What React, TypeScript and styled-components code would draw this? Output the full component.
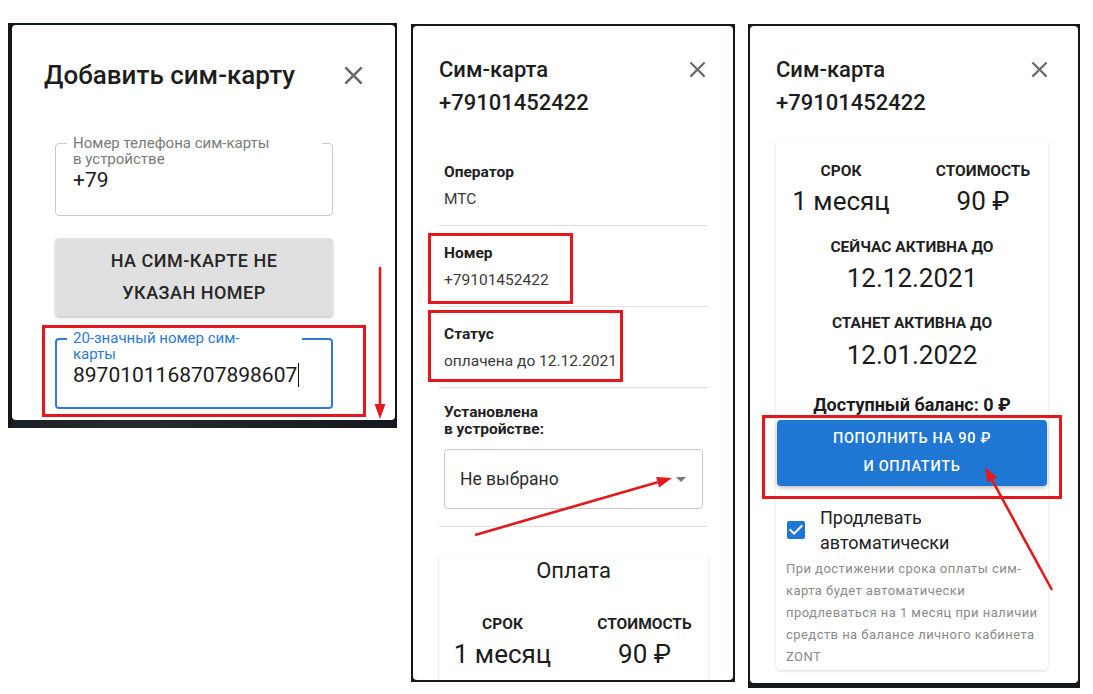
import React from "react"
import styled, { createGlobalStyle } from "styled-components"

const GlobalStyle = createGlobalStyle`
  html, body {
    margin: 0;
    padding: 0;
    background: #fff;
  }
  body {
    font-family: Roboto, "DejaVu Sans", "Liberation Sans", sans-serif;
    color: #1f1f1f;
  }
`

const Page = styled.div`
  display: flex;
  align-items: flex-start;
  padding: 23px 0 0 8px;
  width: 1093px;
  height: 694px;
  box-sizing: border-box;
  overflow: hidden;
`

const Frame = styled.div<{ $w: number; $h: number; $pad: string; $mt?: number; $ml?: number }>`
  position: relative;
  box-sizing: border-box;
  flex: none;
  width: ${p => p.$w}px;
  height: ${p => p.$h}px;
  margin-top: ${p => p.$mt ?? 0}px;
  margin-left: ${p => p.$ml ?? 0}px;
  padding: ${p => p.$pad};
  background: #13181d;
  display: flex;
  flex-direction: column;
`

const Sheet = styled.div`
  flex: 1;
  min-height: 0;
  background: #fff;
  border-radius: 4px;
  overflow: hidden;
  display: flex;
  flex-direction: column;
`

const DarkStrip = styled.div`
  height: 8px;
  background: linear-gradient(90deg, #1b2026 0%, #262b30 30%, #15191d 100%);
`

const DialogHeader = styled.div<{ $pad: string; $align: string }>`
  display: flex;
  justify-content: space-between;
  align-items: ${p => p.$align};
  padding: ${p => p.$pad};
`

const BigTitle = styled.h2`
  margin: 0;
  font-size: 26px;
  line-height: 36px;
  font-weight: 500;
  color: #1d1d1d;
`

const SimTitle = styled.h2`
  margin: 0;
  font-size: 22px;
  line-height: 33px;
  font-weight: 500;
  color: #1d1d1d;
`

const CloseBtn = styled.svg<{ $top?: number }>`
  flex: none;
  margin-top: ${p => p.$top ?? 0}px;
  fill: #6a6a6a;
`

/* ---------- panel 1 ---------- */

const Form = styled.div`
  display: flex;
  flex-direction: column;
  gap: 22px;
  padding: 50px 0 0 43px;
`

const Outlined = styled.div<{ $focused?: boolean; $h: number }>`
  position: relative;
  box-sizing: border-box;
  width: 278px;
  height: ${p => p.$h}px;
  border: ${p => (p.$focused ? "2px solid #2d7bd2" : "1px solid #c8c8c8")};
  border-radius: 4px;
  padding: ${p => (p.$focused ? "23px 16px 0" : "24px 17px 0")};
`

const FloatLabel = styled.label<{ $focused?: boolean; $w: number }>`
  position: absolute;
  top: ${p => (p.$focused ? -10 : -9)}px;
  left: ${p => (p.$focused ? 10 : 11)}px;
  width: ${p => p.$w}px;
  box-sizing: border-box;
  padding: 0 6px;
  background: #fff;
  font-size: 15px;
  line-height: 16px;
  color: ${p => (p.$focused ? "#2d7bd2" : "#7a7a7a")};
`

const FieldValue = styled.div`
  font-size: 21px;
  line-height: 24px;
  color: #1a1a1a;
  display: flex;
  align-items: center;
  white-space: nowrap;
`

const Caret = styled.span`
  display: inline-block;
  width: 0;
  height: 24px;
  border-left: 1.5px solid #111;
  margin-left: 1px;
`

const GreyButton = styled.div`
  box-sizing: border-box;
  width: 278px;
  height: 78px;
  background: #e0e0e0;
  border-radius: 4px;
  box-shadow: 0 2px 3px rgba(0, 0, 0, 0.22);
  display: flex;
  align-items: center;
  justify-content: center;
  text-align: center;
  font-size: 18px;
  line-height: 32px;
  font-weight: 500;
  letter-spacing: 0.5px;
  color: #262626;
`

/* ---------- panels 2, 3 ---------- */

const Body = styled.div<{ $pad: string }>`
  display: flex;
  flex-direction: column;
  padding: ${p => p.$pad};
`

const InfoItem = styled.div`
  padding: 17px 5px 16px;
  border-bottom: 1px solid #e0e0e0;
`

const ItemLabel = styled.div`
  font-size: 15.5px;
  line-height: 20px;
  font-weight: 700;
  color: #212121;
`

const ItemValue = styled.div`
  font-size: 15.5px;
  line-height: 20px;
  margin-top: 7px;
  color: #3a3a3a;
`

const DeviceSection = styled.div`
  padding: 16px 5px 17px;
  border-bottom: 1px solid #e0e0e0;
`

const DeviceLabel = styled.div`
  font-size: 15.5px;
  line-height: 17px;
  font-weight: 700;
  color: #212121;
`

const Select = styled.div`
  box-sizing: border-box;
  height: 60px;
  margin-top: 11px;
  border: 1px solid #c9c9c9;
  border-radius: 4px;
  display: flex;
  align-items: center;
  justify-content: space-between;
  padding: 0 9px 0 15px;
  font-size: 17.5px;
  color: #2b2b2b;
`

const Card = styled.div<{ $mt: number; $pad: string }>`
  margin-top: ${p => p.$mt}px;
  padding: ${p => p.$pad};
  background: #fff;
  border-radius: 4px;
  box-shadow: 0 1px 3px rgba(0, 0, 0, 0.16);
  display: flex;
  flex-direction: column;
  align-items: stretch;
  text-align: center;
`

const CardTitle = styled.div`
  font-size: 22px;
  line-height: 24px;
  color: #1d1d1d;
`

const PriceGrid = styled.div<{ $mt: number }>`
  display: grid;
  grid-template-columns: 120px 120px;
  column-gap: 22px;
  row-gap: 5px;
  justify-content: center;
  margin-top: ${p => p.$mt}px;
`

const SmallCaps = styled.div<{ $mt?: number }>`
  font-size: 15.5px;
  line-height: 20px;
  font-weight: 700;
  color: #1f1f1f;
  margin-top: ${p => p.$mt ?? 0}px;
  white-space: nowrap;
`

const BigValue = styled.div<{ $mt?: number }>`
  font-size: 26px;
  line-height: 30px;
  color: #1b1b1b;
  margin-top: ${p => p.$mt ?? 0}px;
  white-space: nowrap;
`

const Balance = styled.div`
  margin-top: 24px;
  font-size: 18px;
  line-height: 22px;
  font-weight: 700;
  color: #1b1b1b;
`

const PayButton = styled.div`
  margin: 4px 1px 0;
  padding: 5px 0;
  background: #1f77d3;
  border-radius: 4px;
  box-shadow: 0 2px 4px rgba(0, 0, 0, 0.25);
  color: #fff;
  font-size: 14.5px;
  line-height: 28px;
  font-weight: 500;
  letter-spacing: 0.7px;
`

const AutoRow = styled.div`
  display: flex;
  align-items: center;
  gap: 12px;
  margin-top: 19px;
  padding-left: 8px;
  text-align: left;
`

const AutoLabel = styled.div`
  font-size: 18px;
  line-height: 25px;
  color: #222;
`

const Helper = styled.div`
  margin-top: 3px;
  padding: 0 8px 0 10px;
  text-align: left;
  font-size: 13px;
  line-height: 22px;
  letter-spacing: 0.45px;
  color: #8a8a8a;
  white-space: nowrap;
`

/* ---------- annotations ---------- */

const Highlight = styled.div<{ $x: number; $y: number; $w: number; $h: number }>`
  position: absolute;
  left: ${p => p.$x}px;
  top: ${p => p.$y}px;
  width: ${p => p.$w}px;
  height: ${p => p.$h}px;
  box-sizing: border-box;
  border: 3px solid #e5161c;
  pointer-events: none;
`

const Overlay = styled.svg`
  position: absolute;
  left: 0;
  top: 0;
  width: 100%;
  height: 100%;
  overflow: visible;
  pointer-events: none;
`

function Arrow({ x1, y1, x2, y2 }: { x1: number; y1: number; x2: number; y2: number }) {
  const len = Math.hypot(x2 - x1, y2 - y1)
  const dx = (x2 - x1) / len
  const dy = (y2 - y1) / len
  const hl = 15
  const hw = 5.5
  const bx = x2 - dx * hl
  const by = y2 - dy * hl
  const pts = `${x2},${y2} ${bx - dy * hw},${by + dx * hw} ${bx + dy * hw},${by - dx * hw}`
  return (
    <Overlay>
      <line x1={x1} y1={y1} x2={bx} y2={by} stroke="#e3191b" strokeWidth={2.6} />
      <polygon points={pts} fill="#e3191b" />
    </Overlay>
  )
}

function CloseIcon({ size, top }: { size: number; top?: number }) {
  return (
    <CloseBtn $top={top} width={size} height={size} viewBox="0 0 24 24">
      <path d="M19 6.41 17.59 5 12 10.59 6.41 5 5 6.41 10.59 12 5 17.59 6.41 19 12 13.41 17.59 19 19 17.59 13.41 12z" />
    </CloseBtn>
  )
}

function PriceTable({ mt }: { mt: number }) {
  return (
    <PriceGrid $mt={mt}>
      <SmallCaps>СРОК</SmallCaps>
      <SmallCaps>СТОИМОСТЬ</SmallCaps>
      <BigValue>1 месяц</BigValue>
      <BigValue>90 ₽</BigValue>
    </PriceGrid>
  )
}

function AddSimPanel() {
  return (
    <Frame $w={389} $h={405} $pad="2px 2px 0 4px">
      <Sheet>
        <DialogHeader $pad="32px 26px 0 32px" $align="center">
          <BigTitle>Добавить сим-карту</BigTitle>
          <CloseIcon size={31} />
        </DialogHeader>
        <Form>
          <Outlined $h={73}>
            <FloatLabel $w={255}>
              Номер телефона сим-карты
              <br />в устройстве
            </FloatLabel>
            <FieldValue>+79</FieldValue>
          </Outlined>
          <GreyButton>
            НА СИМ-КАРТЕ НЕ
            <br />
            УКАЗАН НОМЕР
          </GreyButton>
          <Outlined $h={71} $focused>
            <FloatLabel $w={235} $focused>
              20-значный номер сим-
              <br />
              карты
            </FloatLabel>
            <FieldValue>
              8970101168707898607
              <Caret />
            </FieldValue>
          </Outlined>
        </Form>
      </Sheet>
      <DarkStrip />
      <Highlight $x={34} $y={302} $w={324} $h={92} />
      <Arrow x1={372} y1={244} x2={372} y2={396} />
    </Frame>
  )
}

function SimInfoPanel() {
  return (
    <Frame $w={324} $h={658} $pad="2px" $mt={1} $ml={14}>
      <Sheet>
        <DialogHeader $pad="27px 22px 0 26px" $align="flex-start">
          <SimTitle>
            Сим-карта
            <br />
            +79101452422
          </SimTitle>
          <CloseIcon size={27} top={3} />
        </DialogHeader>
        <Body $pad="26px 25px 0 26px">
          <InfoItem>
            <ItemLabel>Оператор</ItemLabel>
            <ItemValue>МТС</ItemValue>
          </InfoItem>
          <InfoItem>
            <ItemLabel>Номер</ItemLabel>
            <ItemValue>+79101452422</ItemValue>
          </InfoItem>
          <InfoItem>
            <ItemLabel>Статус</ItemLabel>
            <ItemValue>оплачена до 12.12.2021</ItemValue>
          </InfoItem>
          <DeviceSection>
            <DeviceLabel>
              Установлена
              <br />в устройстве:
            </DeviceLabel>
            <Select>
              <span>Не выбрано</span>
              <svg width="24" height="24" viewBox="0 0 24 24">
                <path d="M7 10l5 5 5-5z" fill="#777" />
              </svg>
            </Select>
          </DeviceSection>
          <Card $mt={27} $pad="5px 0 40px">
            <CardTitle>Оплата</CardTitle>
            <PriceTable mt={31} />
          </Card>
        </Body>
      </Sheet>
      <Highlight $x={17} $y={209} $w={145} $h={71} />
      <Highlight $x={17} $y={286} $w={195} $h={72} />
      <Arrow x1={64} y1={511} x2={261} y2={454} />
    </Frame>
  )
}

function SimPayPanel() {
  return (
    <Frame $w={332} $h={664} $pad="2px 2px 5px 2px" $mt={1} $ml={13}>
      <Sheet>
        <DialogHeader $pad="27px 25px 0 26px" $align="flex-start">
          <SimTitle>
            Сим-карта
            <br />
            +79101452422
          </SimTitle>
          <CloseIcon size={27} top={3} />
        </DialogHeader>
        <Body $pad="21px 30px 0 26px">
          <Card $mt={0} $pad="21px 0 2px">
            <PriceTable mt={0} />
            <SmallCaps $mt={21}>СЕЙЧАС АКТИВНА ДО</SmallCaps>
            <BigValue $mt={6}>12.12.2021</BigValue>
            <SmallCaps $mt={20}>СТАНЕТ АКТИВНА ДО</SmallCaps>
            <BigValue $mt={7}>12.01.2022</BigValue>
            <Balance>Доступный баланс: 0 ₽</Balance>
            <PayButton>
              ПОПОЛНИТЬ НА 90 ₽
              <br />И ОПЛАТИТЬ
            </PayButton>
            <AutoRow>
              <svg width="24" height="24" viewBox="0 0 24 24">
                <path
                  fill="#1f77d3"
                  d="M19 3H5c-1.11 0-2 .9-2 2v14c0 1.1.89 2 2 2h14c1.11 0 2-.9 2-2V5c0-1.1-.89-2-2-2zm-9 14l-5-5 1.41-1.41L10 14.17l7.59-7.59L19 8l-9 9z"
                />
              </svg>
              <AutoLabel>
                Продлевать
                <br />
                автоматически
              </AutoLabel>
            </AutoRow>
            <Helper>
              При достижении срока оплаты сим-
              <br />
              карта будет автоматически
              <br />
              продлеваться на 1 месяц при наличии
              <br />
              средств на балансе личного кабинета
              <br />
              ZONT
            </Helper>
          </Card>
        </Body>
      </Sheet>
      <Highlight $x={14} $y={391} $w={300} $h={84} />
      <Arrow x1={304} y1={566} x2={237} y2={443} />
    </Frame>
  )
}

export default function App() {
  return (
    <>
      <GlobalStyle />
      <Page>
        <AddSimPanel />
        <SimInfoPanel />
        <SimPayPanel />
      </Page>
    </>
  )
}
